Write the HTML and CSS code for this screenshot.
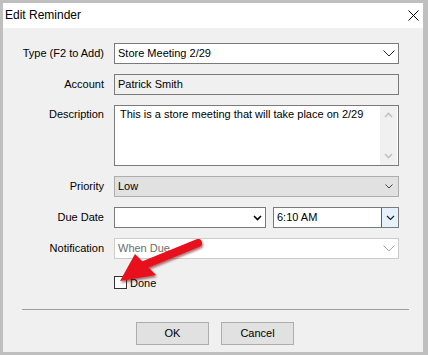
FILE: index.html
```html
<!DOCTYPE html>
<html>
<head>
<meta charset="utf-8">
<link rel="stylesheet" href="styles.css">
</head>
<body>
<div class="window">
  <div class="titlebar">
    <span class="title">Edit Reminder</span>
    <svg class="close" width="11" height="11" viewBox="0 0 11 11"><path d="M0.5 0.5L10.5 10.5M10.5 0.5L0.5 10.5" stroke="#000" stroke-width="1" fill="none"/></svg>
  </div>
  <div class="content">
    <div class="form">
      <div class="lbl">Type (F2 to Add)</div>
      <div class="field combo">
        <span class="val">Store Meeting 2/29</span>
        <svg class="chev-lg" width="12" height="7" viewBox="0 0 12 7"><path d="M0.5 0.5L6 6L11.5 0.5" stroke="#222" stroke-width="1" fill="none"/></svg>
      </div>

      <div class="lbl">Account</div>
      <div class="field readonly"><span class="val">Patrick Smith</span></div>

      <div class="lbl top">Description</div>
      <div class="field memo">
        <span class="memo-text">This is a store meeting that will take place on 2/29</span>
        <div class="vscroll">
          <svg width="9" height="6" viewBox="0 0 9 6"><path d="M1 5L4.5 1.5L8 5" stroke="#c2c2c2" stroke-width="1.6" fill="none"/></svg>
          <svg width="9" height="6" viewBox="0 0 9 6"><path d="M1 1L4.5 4.5L8 1" stroke="#c2c2c2" stroke-width="1.6" fill="none"/></svg>
        </div>
      </div>

      <div class="lbl">Priority</div>
      <div class="field combo btn-combo">
        <span class="val">Low</span>
        <svg class="chev-sm" width="8" height="5" viewBox="0 0 8 5"><path d="M0.5 0.5L4 4L7.5 0.5" stroke="#444" stroke-width="1" fill="none"/></svg>
      </div>

      <div class="lbl">Due Date</div>
      <div class="date-row">
        <div class="field combo date">
          <svg class="chev-bold" width="9" height="6" viewBox="0 0 9 6"><path d="M1 1L4.5 4.5L8 1" stroke="#000" stroke-width="1.6" fill="none"/></svg>
        </div>
        <div class="field combo time">
          <span class="val">6:10 AM</span>
          <div class="drop-btn">
            <svg width="9" height="6" viewBox="0 0 9 6"><path d="M1 1L4.5 4.5L8 1" stroke="#222" stroke-width="1.2" fill="none"/></svg>
          </div>
        </div>
      </div>

      <div class="lbl">Notification</div>
      <div class="field combo disabled">
        <span class="val">When Due</span>
        <svg class="chev-lg" width="12" height="7" viewBox="0 0 12 7"><path d="M0.5 0.5L6 6L11.5 0.5" stroke="#a8a8a8" stroke-width="1" fill="none"/></svg>
      </div>

      <div class="spacer"></div>
      <div class="check-row">
        <span class="checkbox"></span>
        <span class="check-label">Done</span>
      </div>
    </div>

    <div class="separator"></div>
    <div class="buttons">
      <div class="btn">OK</div>
      <div class="btn">Cancel</div>
    </div>
  </div>
</div>
<svg class="arrow" width="428" height="355" viewBox="0 0 428 355">
  <g class="arrow-shape">
    <line x1="198" y1="243" x2="144" y2="265" stroke="#e8101c" stroke-width="8" stroke-linecap="round"/>
    <polygon points="120,281 135,254 156,275" fill="#e8101c"/>
  </g>
</svg>
</body>
</html>
```
FILE: styles.css
```css
html, body {
  margin: 0;
  padding: 0;
}
body {
  position: relative;
  width: 428px;
  height: 355px;
  overflow: hidden;
  font-family: "Liberation Sans", Arial, sans-serif;
  font-size: 11px;
  color: #000;
}
.window {
  box-sizing: border-box;
  width: 428px;
  height: 355px;
  border-style: solid;
  border-color: #bfbfbf;
  border-width: 3px 5px 3px 3px;
  background: #f0f0f0;
  display: flex;
  flex-direction: column;
}
.titlebar {
  height: 25px;
  background: #fff;
  display: flex;
  align-items: center;
  justify-content: space-between;
  padding: 0 4px 0 2px;
  flex: none;
}
.title {
  font-size: 12px;
  color: #000;
  position: relative;
  top: -1px;
}
.close {
  display: block;
  margin-top: -1px;
}
.content {
  flex: 1;
  display: flex;
  flex-direction: column;
}
.form {
  display: grid;
  grid-template-columns: 101px 285px;
  grid-template-rows: 21px 21px 61px 21px 21px 21px auto;
  column-gap: 10px;
  row-gap: 10px;
  padding-top: 15px;
}
.lbl {
  text-align: right;
  align-self: center;
  white-space: nowrap;
  line-height: 13px;
}
.lbl.top {
  align-self: start;
  padding-top: 3px;
}
.field {
  box-sizing: border-box;
  height: 21px;
  border: 1px solid #7a7a7a;
  background: #fff;
  display: flex;
  align-items: center;
  position: relative;
}
.val {
  padding-left: 3px;
  white-space: nowrap;
  line-height: 13px;
}
.combo {
  justify-content: space-between;
}
.chev-lg {
  display: block;
  margin-right: 3px;
}
.readonly {
  background: #f0f0f0;
}
.memo {
  height: 61px;
  align-items: stretch;
}
.memo-text {
  flex: 1;
  padding: 2px 0 0 5px;
  line-height: 13px;
  white-space: nowrap;
}
.vscroll {
  width: 17px;
  background: #f0f0f0;
  display: flex;
  flex-direction: column;
  justify-content: space-between;
  align-items: center;
  padding: 6px 0 6px;
  margin: 0 1px 0 0;
}
.vscroll svg {
  display: block;
}
.btn-combo {
  background: #e1e1e1;
  border-color: #adadad;
}
.chev-sm {
  display: block;
  margin-right: 5px;
}
.date-row {
  display: flex;
  gap: 7px;
}
.date {
  width: 152px;
  justify-content: flex-end;
}
.chev-bold {
  display: block;
  margin-right: 3px;
}
.time {
  flex: 1;
  align-items: stretch;
}
.time .val {
  align-self: center;
}
.drop-btn {
  width: 16px;
  background: #e5f1fb;
  border-left: 1px solid #0078d7;
  display: flex;
  align-items: center;
  justify-content: center;
}
.drop-btn svg {
  display: block;
}
.disabled {
  border-color: #cccccc;
  color: #6d6d6d;
}
.check-row {
  display: flex;
  align-items: center;
  margin-top: 7px;
}
.checkbox {
  box-sizing: border-box;
  width: 13px;
  height: 13px;
  border: 1px solid #333;
  background: #fff;
  flex: none;
}
.check-label {
  margin-left: 3px;
  line-height: 13px;
  position: relative;
  top: 1px;
}
.separator {
  height: 1px;
  background: #a0a0a0;
  margin: 20px 14px 0 19px;
}
.buttons {
  display: flex;
  justify-content: center;
  gap: 12px;
  padding-left: 4px;
  margin-top: 12px;
}
.btn {
  box-sizing: border-box;
  width: 73px;
  height: 23px;
  background: #e1e1e1;
  border: 1px solid #adadad;
  display: flex;
  align-items: center;
  justify-content: center;
  line-height: 13px;
}
.arrow {
  position: absolute;
  left: 0;
  top: 0;
  pointer-events: none;
}
.arrow-shape {
  filter: drop-shadow(1px 2px 1px rgba(110, 0, 0, 0.55));
}
```
